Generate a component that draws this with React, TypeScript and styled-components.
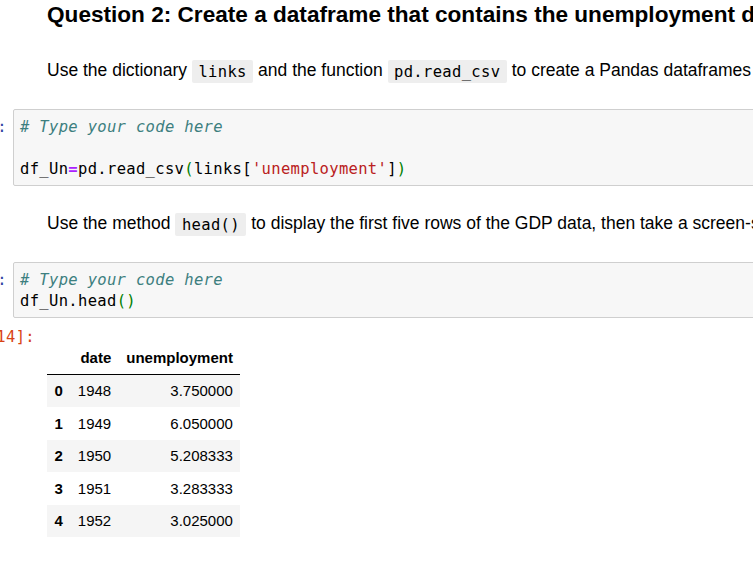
import React from "react";
import styled, { createGlobalStyle } from "styled-components";

const GlobalStyle = createGlobalStyle`
  html, body {
    margin: 0;
    padding: 0;
    background: #ffffff;
    overflow: hidden;
  }
`;

const MONO = `"DejaVu Sans Mono", "Liberation Mono", monospace`;
const SANS = `"Liberation Sans", Arial, sans-serif`;

const Notebook = styled.div`
  width: 1800px;
  color: #000;
  font-family: ${SANS};
`;

const Markdown = styled.div<{ $top: number }>`
  margin-top: ${(p) => p.$top}px;
  padding-left: 47px;
  white-space: nowrap;
`;

const Heading = styled.h2`
  margin: 0;
  font-size: 22.6px;
  line-height: 26px;
  font-weight: bold;
`;

const Para = styled.p`
  margin: 0;
  font-size: 17.5px;
  line-height: 25px;
  height: 25px;
`;

const Chip = styled.code`
  font-family: ${MONO};
  font-size: 15.5px;
  line-height: 16px;
  letter-spacing: 0.33px;
  background: #eeeeee;
  padding: 2.5px 6.5px;
  border-radius: 2px;
`;

const CellRow = styled.div<{ $top: number }>`
  display: flex;
  align-items: flex-start;
  margin-top: ${(p) => p.$top}px;
`;

const Prompt = styled.div<{ $width: number; $pad: number; $color: string; $topPad: number }>`
  flex: 0 0 ${(p) => p.$width}px;
  width: ${(p) => p.$width}px;
  box-sizing: border-box;
  display: flex;
  justify-content: flex-end;
  padding-right: ${(p) => p.$pad}px;
  padding-top: ${(p) => p.$topPad}px;
  font-family: ${MONO};
  font-size: 15.5px;
  letter-spacing: 0.33px;
  line-height: 21px;
  white-space: nowrap;
  color: ${(p) => p.$color};
`;

const CodeBox = styled.div`
  flex: 1;
  border: 1px solid #cfcfcf;
  border-radius: 2px;
  background: #f7f7f7;
  padding: 7px 6px 5px;
`;

const CodeLine = styled.pre`
  margin: 0;
  font-family: ${MONO};
  font-size: 15.5px;
  letter-spacing: 0.33px;
  line-height: 21px;
  height: 21px;
  white-space: pre;
  color: #000;
`;

const Comment = styled.span`
  color: #3d7f7f;
  font-style: italic;
`;
const Op = styled.span`
  color: #aa22ff;
  font-weight: bold;
`;
const Paren = styled.span`
  color: #008000;
`;
const Str = styled.span`
  color: #ba2121;
`;

const OutputArea = styled.div`
  padding-top: 14.5px;
`;

const Table = styled.table`
  border-collapse: collapse;
  border-spacing: 0;
  font-family: ${SANS};
  font-size: 15px;
  color: #000;
`;

const HeadCell = styled.th`
  padding: 7.5px;
  line-height: 17.5px;
  text-align: right;
  font-weight: bold;
  border-bottom: 1px solid #000;
  white-space: nowrap;
`;

const Row = styled.tr<{ $striped: boolean }>`
  background: ${(p) => (p.$striped ? "#f5f5f5" : "transparent")};
`;

const IndexCell = styled.th`
  padding: 7.5px;
  line-height: 17.5px;
  text-align: left;
  font-weight: bold;
`;

const DataCell = styled.td`
  padding: 7.5px;
  line-height: 17.5px;
  text-align: right;
  white-space: nowrap;
`;

const rows = [
  ["0", "1948", "3.750000"],
  ["1", "1949", "6.050000"],
  ["2", "1950", "5.208333"],
  ["3", "1951", "3.283333"],
  ["4", "1952", "3.025000"],
];

export default function App() {
  return (
    <>
      <GlobalStyle />
      <Notebook>
        <Markdown $top={2}>
          <Heading>
            Question 2: Create a dataframe that contains the unemployment data. Display the first five rows of the dataframe.
          </Heading>
        </Markdown>
        <Markdown $top={30}>
          <Para>
            Use the dictionary <Chip>links</Chip> and the function <Chip>pd.read_csv</Chip> to create a Pandas dataframes that contains the data for unemployment.
          </Para>
        </Markdown>
        <CellRow $top={26}>
          <Prompt $width={13} $pad={6} $color="#303f9f" $topPad={8}>
            In&nbsp;[13]:
          </Prompt>
          <CodeBox>
            <CodeLine>
              <Comment># Type your code here</Comment>
            </CodeLine>
            <CodeLine> </CodeLine>
            <CodeLine>
              df_Un<Op>=</Op>pd.read_csv<Paren>(</Paren>links[<Str>'unemployment'</Str>]<Paren>)</Paren>
            </CodeLine>
          </CodeBox>
        </CellRow>
        <Markdown $top={25.4}>
          <Para>
            Use the method <Chip>head()</Chip> to display the first five rows of the GDP data, then take a screen-shot.
          </Para>
        </Markdown>
        <CellRow $top={25.6}>
          <Prompt $width={13} $pad={6} $color="#303f9f" $topPad={8}>
            In&nbsp;[14]:
          </Prompt>
          <CodeBox>
            <CodeLine>
              <Comment># Type your code here</Comment>
            </CodeLine>
            <CodeLine>
              df_Un.head<Paren>()</Paren>
            </CodeLine>
          </CodeBox>
        </CellRow>
        <CellRow $top={9}>
          <Prompt $width={47} $pad={12} $color="#d84315" $topPad={0}>
            Out[14]:
          </Prompt>
          <OutputArea>
            <Table>
              <thead>
                <tr>
                  <HeadCell></HeadCell>
                  <HeadCell>date</HeadCell>
                  <HeadCell>unemployment</HeadCell>
                </tr>
              </thead>
              <tbody>
                {rows.map((r, i) => (
                  <Row key={r[0]} $striped={i % 2 === 0}>
                    <IndexCell>{r[0]}</IndexCell>
                    <DataCell>{r[1]}</DataCell>
                    <DataCell>{r[2]}</DataCell>
                  </Row>
                ))}
              </tbody>
            </Table>
          </OutputArea>
        </CellRow>
      </Notebook>
    </>
  );
}
